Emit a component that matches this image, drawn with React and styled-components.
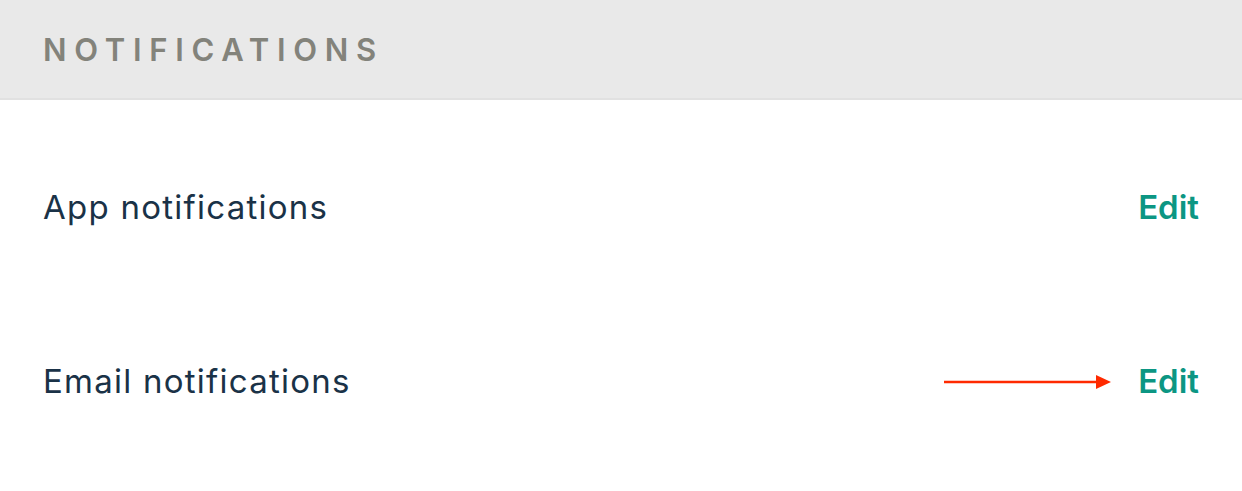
import React from "react";
import styled, { createGlobalStyle } from "styled-components";

const GlobalStyle = createGlobalStyle`
	html, body {
		margin: 0;
		padding: 0;
		background: #fff;
	}

	body {
		font-family: Inter, "Liberation Sans", sans-serif;
	}
`;

const rows = [
	{ id: "app", label: "App notifications", pointed: false },
	{ id: "email", label: "Email notifications", pointed: true },
];

function Arrow() {
	return (
		<ArrowSvg width="168" height="16" viewBox="0 0 168 16">
			<line x1="0" y1="8" x2="154" y2="8" stroke="#ff2a00" strokeWidth="2.4" />
			<polygon points="152,1 167,8 152,15" fill="#ff2a00" />
		</ArrowSvg>
	);
}

function App() {
	return (
		<>
			<GlobalStyle />
			<Panel>
				<Header>
					<Title>Notifications</Title>
				</Header>
				<List>
					{rows.map((row) => (
						<Row key={row.id}>
							<Label>{row.label}</Label>
							<Actions>
								{row.pointed && <Arrow />}
								<EditLink href="#">Edit</EditLink>
							</Actions>
						</Row>
					))}
				</List>
			</Panel>
		</>
	);
}

export default App;

const Panel = styled.section`
	width: 100%;
	min-height: 491px;
	background: #fff;
`;

const Header = styled.header`
	height: 98px;
	display: flex;
	align-items: center;
	padding: 0 43px;
	background: #e9e9e9;
	border-bottom: 2px solid #e1e1e1;
	box-sizing: content-box;
`;

const Title = styled.h2`
	margin: 0;
	font-size: 31px;
	font-weight: 600;
	letter-spacing: 7.7px;
	text-transform: uppercase;
	color: #83837b;
`;

const List = styled.div`
	padding-top: 20px;
`;

const Row = styled.div`
	height: 174px;
	display: flex;
	align-items: center;
	justify-content: space-between;
	padding: 0 43px;
`;

const Label = styled.span`
	font-size: 33px;
	font-weight: 400;
	letter-spacing: 1.25px;
	color: #1a3247;
`;

const Actions = styled.div`
	display: flex;
	align-items: center;
	gap: 26px;
`;

const ArrowSvg = styled.svg`
	display: block;
	margin-top: 1px;
`;

const EditLink = styled.a`
	font-size: 33px;
	font-weight: 600;
	color: #0c9683;
	text-decoration: none;
`;
